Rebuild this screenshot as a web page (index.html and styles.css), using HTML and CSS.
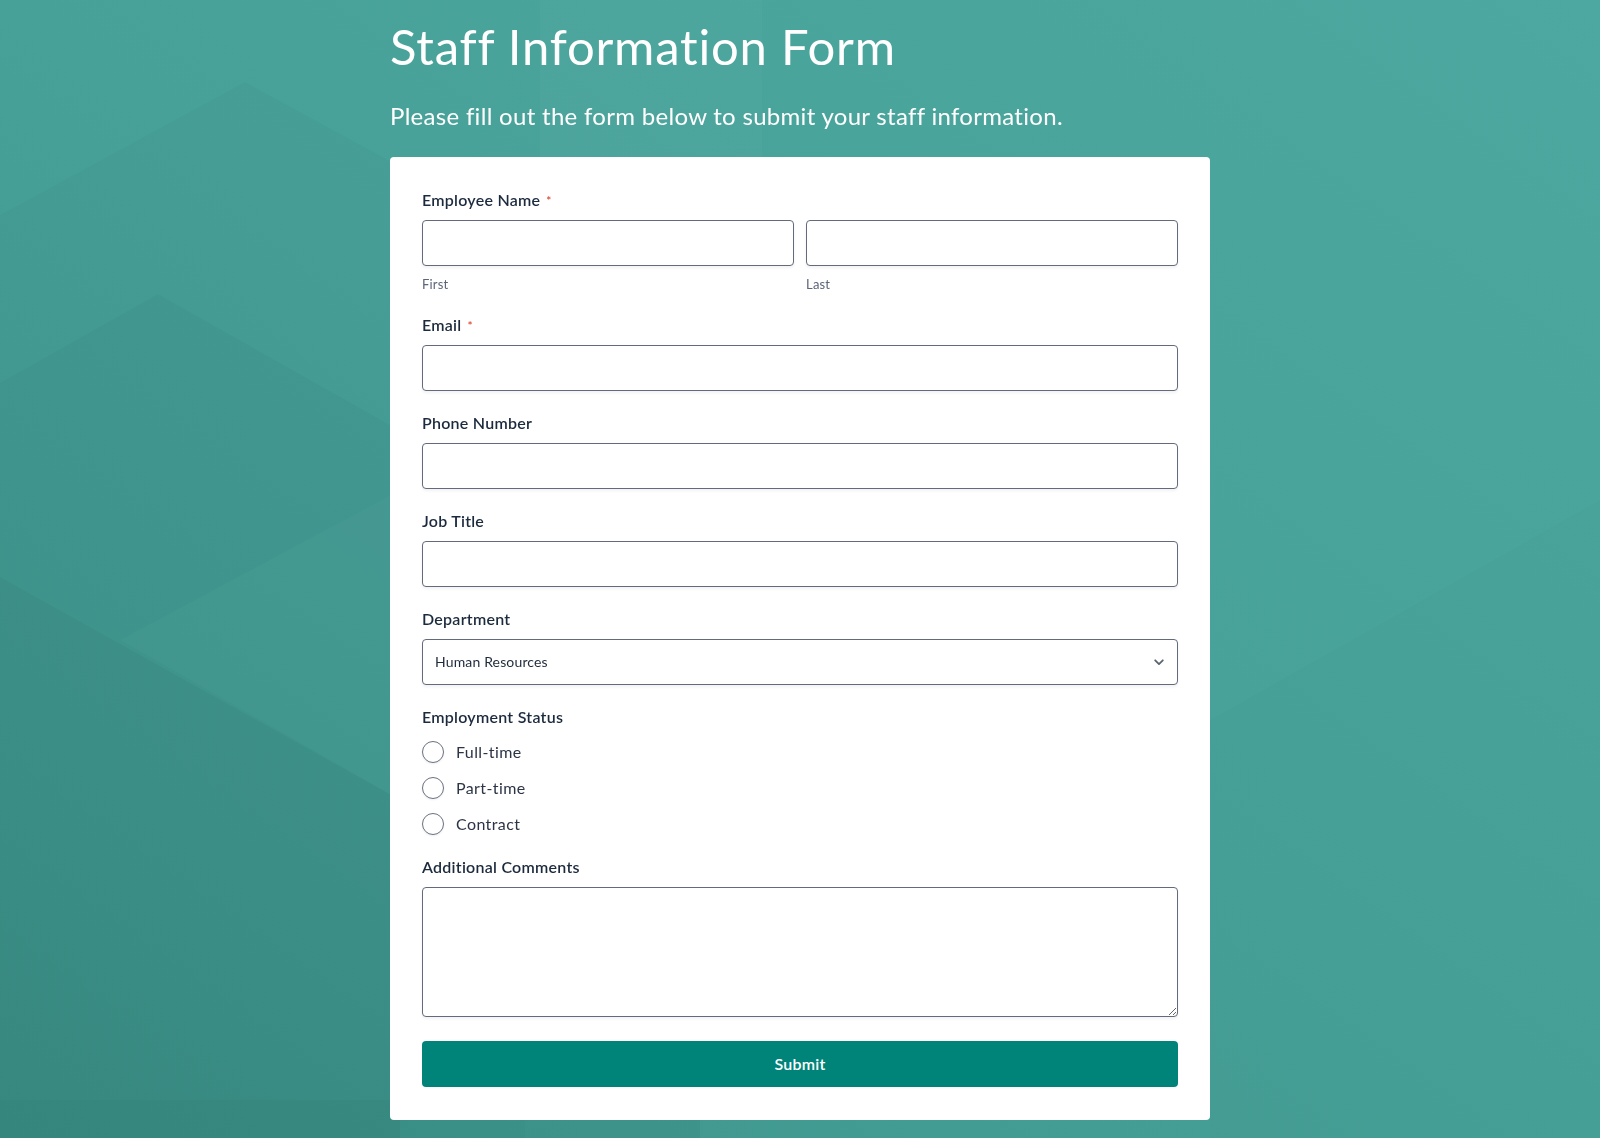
FILE: index.html
```html
<!DOCTYPE html>
<html lang="en">
<head>
<meta charset="utf-8">
<title>Staff Information Form</title>
<link rel="stylesheet" href="styles.css">
</head>
<body>
<svg class="bg" viewBox="0 0 1600 1138" preserveAspectRatio="none" aria-hidden="true">
  <defs>
    <linearGradient id="g" x1="1" y1="0" x2="0" y2="1">
      <stop offset="0" stop-color="#4ca8a0"/>
      <stop offset="0.5" stop-color="#47a198"/>
      <stop offset="1" stop-color="#3d948b"/>
    </linearGradient>
  </defs>
  <rect width="1600" height="1138" fill="url(#g)"/>
  <rect x="540" y="0" width="222" height="160" fill="#ffffff" opacity="0.025"/>
  <polygon points="245,82 700,330 700,1138 0,1138 0,215" fill="#000" opacity="0.018"/>
  <polygon points="158,294 700,600 700,1138 0,1138 0,383" fill="#000" opacity="0.018"/>
  <polygon points="0,577 400,800 400,1138 0,1138" fill="#000" opacity="0.03"/>
  <polygon points="120,640 400,490 400,800" fill="#fff" opacity="0.02"/>
  <rect x="0" y="1100" width="525" height="38" fill="#000" opacity="0.02"/>
  <polygon points="1210,720 1600,500 1600,1138 1210,1138" fill="#000" opacity="0.012"/>
</svg>
<main class="page">
  <h1 class="title">Staff Information Form</h1>
  <p class="subtitle">Please fill out the form below to submit your staff information.</p>
  <form class="card">
    <div class="field field-name">
      <label class="label">Employee Name<span class="req">*</span></label>
      <div class="name-row">
        <div class="name-col">
          <input class="input" type="text">
          <span class="sublabel">First</span>
        </div>
        <div class="name-col">
          <input class="input" type="text">
          <span class="sublabel">Last</span>
        </div>
      </div>
    </div>
    <div class="field">
      <label class="label">Email<span class="req">*</span></label>
      <input class="input" type="email">
    </div>
    <div class="field">
      <label class="label">Phone Number</label>
      <input class="input" type="tel">
    </div>
    <div class="field">
      <label class="label">Job Title</label>
      <input class="input" type="text">
    </div>
    <div class="field">
      <label class="label">Department</label>
      <div class="select-wrap">
        <select class="select">
          <option>Human Resources</option>
          <option>Finance</option>
          <option>Engineering</option>
          <option>Marketing</option>
        </select>
        <svg class="chevron" viewBox="0 0 10 7" width="10" height="7"><path d="M1.2 1.3 L5 5.1 L8.8 1.3" fill="none" stroke="#5b6472" stroke-width="1.8" stroke-linecap="round" stroke-linejoin="round"/></svg>
      </div>
    </div>
    <div class="field field-radio">
      <label class="label">Employment Status</label>
      <div class="radios">
        <label class="radio"><input type="radio" name="status" class="radio-input"><span>Full-time</span></label>
        <label class="radio"><input type="radio" name="status" class="radio-input"><span>Part-time</span></label>
        <label class="radio"><input type="radio" name="status" class="radio-input"><span>Contract</span></label>
      </div>
    </div>
    <div class="field field-comments">
      <label class="label">Additional Comments</label>
      <textarea class="textarea"></textarea>
    </div>
    <button type="button" class="submit">Submit</button>
  </form>
</main>
</body>
</html>
```

FILE: styles.css
```css
* { box-sizing: border-box; }

html, body {
  margin: 0;
  padding: 0;
}

body {
  font-family: Lato, "Liberation Sans", sans-serif;
  font-variant-ligatures: none;
  background: #46a097;
  min-height: 1138px;
  overflow: hidden;
}

.bg {
  position: fixed;
  inset: 0;
  width: 100%;
  height: 100%;
  z-index: -1;
}

.page {
  width: 820px;
  margin: 0 auto;
  padding-top: 17px;
}

.title {
  margin: 0;
  font-size: 49px;
  line-height: 1.2;
  font-weight: 400;
  letter-spacing: 0.8px;
  color: #ffffff;
}

.subtitle {
  margin: 26px 0 0;
  font-size: 24px;
  line-height: 1.2;
  font-weight: 400;
  letter-spacing: 0.3px;
  color: #ffffff;
}

.card {
  margin-top: 26px;
  background: #ffffff;
  border-radius: 4px;
  padding: 33px 32px 33px;
  display: flex;
  flex-direction: column;
}

.field {
  display: flex;
  flex-direction: column;
  margin-bottom: 22px;
}

.field-name { margin-bottom: 23px; }
.field-radio { margin-bottom: 22px; }
.field-comments { margin-bottom: 24px; }

.label {
  font-size: 16px;
  line-height: 20px;
  font-weight: 600;
  letter-spacing: 0.25px;
  color: #1c2a3e;
  margin-bottom: 10px;
}

.req {
  color: #e0412f;
  font-size: 12px;
  line-height: 1;
  margin-left: 6px;
  position: relative;
  top: -1px;
}

.name-row {
  display: grid;
  grid-template-columns: 1fr 1fr;
  gap: 12px;
}

.name-col {
  display: flex;
  flex-direction: column;
}

.input,
.select,
.textarea {
  width: 100%;
  height: 46px;
  border: 1px solid #626a7b;
  border-radius: 4px;
  background: #ffffff;
  box-shadow: 0 2px 3px rgba(30, 40, 60, 0.06);
  font-family: Lato, "Liberation Sans", sans-serif;
  outline: none;
  margin: 0;
}

.sublabel {
  margin-top: 10px;
  font-size: 13px;
  line-height: 16px;
  letter-spacing: 0.2px;
  color: #5c6677;
}

.select-wrap {
  position: relative;
}

.select {
  appearance: none;
  -webkit-appearance: none;
  padding: 0 40px 0 12px;
  font-size: 14px;
  letter-spacing: 0.15px;
  color: #1f2a3a;
}

.chevron {
  position: absolute;
  right: 14px;
  top: 20px;
  pointer-events: none;
}

.radios {
  display: flex;
  flex-direction: column;
  gap: 14px;
  margin-top: 4px;
}

.radio {
  display: flex;
  align-items: center;
  height: 22px;
  font-size: 16px;
  line-height: 22px;
  letter-spacing: 0.4px;
  color: #2c3446;
}

.radio-input {
  appearance: none;
  -webkit-appearance: none;
  width: 22px;
  height: 22px;
  margin: 0 12px 0 0;
  border: 1px solid #6b7280;
  border-radius: 50%;
  background: #fff;
  box-shadow: 0 1px 2px rgba(30, 40, 60, 0.08);
  flex: none;
}

.textarea {
  height: 130px;
  resize: vertical;
  padding: 10px 12px;
  font-size: 14px;
}

.submit {
  height: 46px;
  border: none;
  border-radius: 4px;
  background: #008479;
  color: #ffffff;
  font-family: Lato, "Liberation Sans", sans-serif;
  font-size: 16px;
  font-weight: 600;
  letter-spacing: 0.2px;
  cursor: pointer;
}
```
